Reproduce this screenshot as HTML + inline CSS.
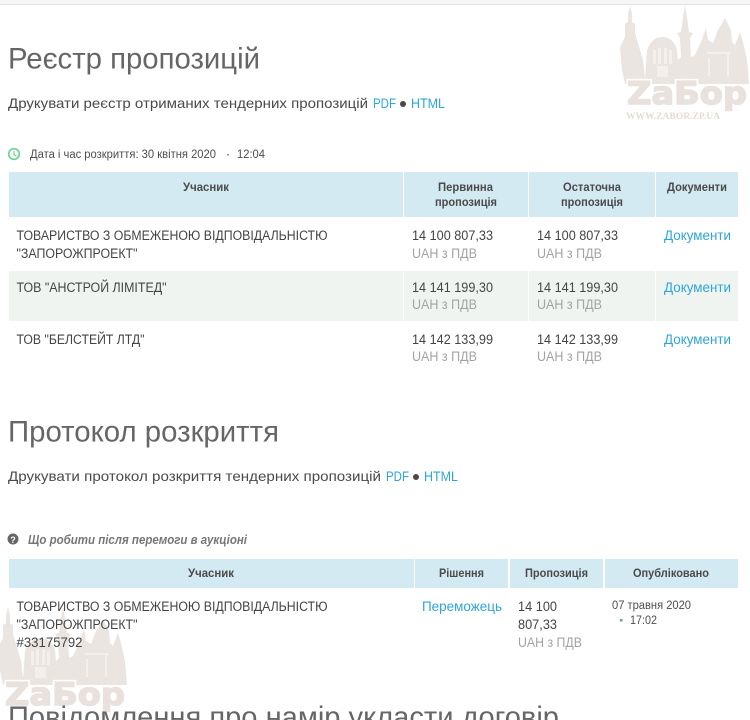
<!DOCTYPE html>
<html lang="uk">
<head>
<meta charset="utf-8">
<title>Реєстр пропозицій</title>
<style>
html,body{margin:0;padding:0;background:#fff;width:750px;height:720px;overflow:hidden}
svg{display:block;position:absolute;left:0;top:0}
text{font-family:"Liberation Sans",sans-serif;white-space:pre}
.h{font-size:30px;fill:#666}
.p{font-size:14px;fill:#4a4a4a}
.l{font-size:14px;fill:#2ea5dc}
.c{font-size:13.5px;fill:#444}
.g{font-size:13.5px;fill:#a3a3a3}
.th{font-size:11.5px;font-weight:bold;fill:#4a4a4a}
.s{font-size:11.5px;fill:#4d4d4d}
.w{font-family:"DejaVu Sans",sans-serif;font-size:31px;font-weight:bold;fill:#e8e1dd;stroke:#e8e1dd;stroke-width:1.4px}
.wo{font-family:"DejaVu Sans",sans-serif;font-size:31px;font-weight:bold;fill:#fff;stroke:#fff;stroke-width:4.5px}
</style>
</head>
<body>
<svg width="750" height="720" viewBox="0 0 750 720" xmlns="http://www.w3.org/2000/svg">
<rect width="750" height="720" fill="#fff"/>
<rect width="750" height="4" fill="#f6f6f6"/>
<rect y="4" width="750" height="1" fill="#e2e2e2"/>

<!-- watermark top right -->
<g>
<path fill="#ebe5e1" d="M620 47L625 37V24L628 22V14L630 6L632 14V22L635 24V33L643 60L645 78L647 50C650 42 655 37 662 37C670 37 675 42 677 50L678 60L681 57L680 38L677 33L681 32L683 17L685 5L687 17L689 32L693 33L690 38L691 57L695 55L701 42L706 28L708 40L713 43L718 30L725 18L731 30L732 42L735 45L740 32L743 42L747 60L749 84H628L625 84L622 70Z"/>
<g fill="#f3efed">
<rect x="653" y="50" width="3" height="14"/><rect x="658" y="48" width="3" height="16"/><rect x="664" y="48" width="3" height="16"/><rect x="669" y="50" width="3" height="14"/>
<rect x="657" y="66" width="11" height="11"/>
<rect x="708" y="58" width="2" height="18"/><rect x="727" y="54" width="2" height="22"/><rect x="707" y="52" width="24" height="2"/>
</g>
<text class="wo" x="627" y="104" textLength="120" lengthAdjust="spacingAndGlyphs">ZaБор</text>
<text class="w" x="627" y="104" textLength="120" lengthAdjust="spacingAndGlyphs">ZaБор</text>
<text x="626" y="119" font-size="9" font-weight="bold" textLength="94" lengthAdjust="spacingAndGlyphs" style="font-family:'Liberation Serif',serif" fill="#e3dcd8">WWW.ZABOR.ZP.UA</text>
</g>

<!-- watermark bottom left -->
<g transform="translate(-622 601)">
<path fill="#ebe5e1" d="M620 47L625 37V24L628 22V14L630 6L632 14V22L635 24V33L643 60L645 78L647 50C650 42 655 37 662 37C670 37 675 42 677 50L678 60L681 57L680 38L677 33L681 32L683 17L685 5L687 17L689 32L693 33L690 38L691 57L695 55L701 42L706 28L708 40L713 43L718 30L725 18L731 30L732 42L735 45L740 32L743 42L747 60L749 84H628L625 84L622 70Z"/>
<g fill="#f3efed">
<rect x="653" y="50" width="3" height="14"/><rect x="658" y="48" width="3" height="16"/><rect x="664" y="48" width="3" height="16"/><rect x="669" y="50" width="3" height="14"/>
<rect x="657" y="66" width="11" height="11"/>
<rect x="708" y="58" width="2" height="18"/><rect x="727" y="54" width="2" height="22"/><rect x="707" y="52" width="24" height="2"/>
</g>
<text class="wo" x="627" y="104" textLength="120" lengthAdjust="spacingAndGlyphs">ZaБор</text>
<text class="w" x="627" y="104" textLength="120" lengthAdjust="spacingAndGlyphs">ZaБор</text>
</g>

<!-- section 1 -->
<text class="h" x="8" y="68.5" textLength="252" lengthAdjust="spacingAndGlyphs">Реєстр пропозицій</text>
<text class="p" x="8" y="108" textLength="360" lengthAdjust="spacingAndGlyphs">Друкувати реєстр отриманих тендерних пропозицій</text>
<text class="l" x="373" y="108" font-size="13" textLength="23" lengthAdjust="spacingAndGlyphs">PDF</text>
<circle cx="403" cy="104" r="3" fill="#4a4a4a"/>
<text class="l" x="411" y="108" textLength="34" lengthAdjust="spacingAndGlyphs">HTML</text>

<!-- clock -->
<circle cx="14" cy="154" r="5.3" fill="none" stroke="#72d19a" stroke-width="1.7"/>
<path d="M14 151V154.5L16.5 156" fill="none" stroke="#72d19a" stroke-width="1.2"/>
<text class="s" x="30" y="158" textLength="186" lengthAdjust="spacingAndGlyphs">Дата і час розкриття: 30 квітня 2020</text>
<rect x="227" y="154" width="2" height="1.5" fill="#7a9a85"/>
<text class="s" x="237" y="158" textLength="28" lengthAdjust="spacingAndGlyphs">12:04</text>

<!-- table 1 -->
<g fill="#d4eaf2">
<rect x="9" y="172" width="394" height="45"/>
<rect x="404" y="172" width="124" height="45"/>
<rect x="529" y="172" width="126" height="45"/>
<rect x="656" y="172" width="82" height="45"/>
</g>
<g fill="#f0f4f1">
<rect x="9" y="271" width="394" height="50"/>
<rect x="404" y="271" width="124" height="50"/>
<rect x="529" y="271" width="126" height="50"/>
<rect x="656" y="271" width="82" height="50"/>
</g>
<text class="th" x="183" y="191" textLength="46" lengthAdjust="spacingAndGlyphs">Учасник</text>
<text class="th" x="438" y="191" textLength="55" lengthAdjust="spacingAndGlyphs">Первинна</text>
<text class="th" x="435" y="206" textLength="62" lengthAdjust="spacingAndGlyphs">пропозиція</text>
<text class="th" x="563" y="191" textLength="58" lengthAdjust="spacingAndGlyphs">Остаточна</text>
<text class="th" x="561" y="206" textLength="62" lengthAdjust="spacingAndGlyphs">пропозиція</text>
<text class="th" x="667" y="191" textLength="60" lengthAdjust="spacingAndGlyphs">Документи</text>

<text class="c" x="16.5" y="240" textLength="311" lengthAdjust="spacingAndGlyphs">ТОВАРИСТВО З ОБМЕЖЕНОЮ ВІДПОВІДАЛЬНІСТЮ</text>
<text class="c" x="16.5" y="258" textLength="121" lengthAdjust="spacingAndGlyphs">"ЗАПОРОЖПРОЕКТ"</text>
<text class="c" x="412" y="240" textLength="81" lengthAdjust="spacingAndGlyphs">14 100 807,33</text>
<text class="g" x="412" y="258" textLength="65" lengthAdjust="spacingAndGlyphs">UAH з ПДВ</text>
<text class="c" x="537" y="240" textLength="81" lengthAdjust="spacingAndGlyphs">14 100 807,33</text>
<text class="g" x="537" y="258" textLength="65" lengthAdjust="spacingAndGlyphs">UAH з ПДВ</text>
<text class="l" x="664" y="240" textLength="67" lengthAdjust="spacingAndGlyphs">Документи</text>

<text class="c" x="16.5" y="292" textLength="150" lengthAdjust="spacingAndGlyphs">ТОВ "АНСТРОЙ ЛІМІТЕД"</text>
<text class="c" x="412" y="292" textLength="81" lengthAdjust="spacingAndGlyphs">14 141 199,30</text>
<text class="g" x="412" y="309" textLength="65" lengthAdjust="spacingAndGlyphs">UAH з ПДВ</text>
<text class="c" x="537" y="292" textLength="81" lengthAdjust="spacingAndGlyphs">14 141 199,30</text>
<text class="g" x="537" y="309" textLength="65" lengthAdjust="spacingAndGlyphs">UAH з ПДВ</text>
<text class="l" x="664" y="292" textLength="67" lengthAdjust="spacingAndGlyphs">Документи</text>

<text class="c" x="16.5" y="344" textLength="128" lengthAdjust="spacingAndGlyphs">ТОВ "БЕЛСТЕЙТ ЛТД"</text>
<text class="c" x="412" y="344" textLength="81" lengthAdjust="spacingAndGlyphs">14 142 133,99</text>
<text class="g" x="412" y="361" textLength="65" lengthAdjust="spacingAndGlyphs">UAH з ПДВ</text>
<text class="c" x="537" y="344" textLength="81" lengthAdjust="spacingAndGlyphs">14 142 133,99</text>
<text class="g" x="537" y="361" textLength="65" lengthAdjust="spacingAndGlyphs">UAH з ПДВ</text>
<text class="l" x="664" y="344" textLength="67" lengthAdjust="spacingAndGlyphs">Документи</text>

<!-- section 2 -->
<text class="h" x="8" y="441.5" textLength="271" lengthAdjust="spacingAndGlyphs">Протокол розкриття</text>
<text class="p" x="8" y="481" textLength="373" lengthAdjust="spacingAndGlyphs">Друкувати протокол розкриття тендерних пропозицій</text>
<text class="l" x="386" y="481" font-size="13" textLength="23" lengthAdjust="spacingAndGlyphs">PDF</text>
<circle cx="416" cy="477" r="3" fill="#4a4a4a"/>
<text class="l" x="424" y="481" textLength="34" lengthAdjust="spacingAndGlyphs">HTML</text>

<!-- help -->
<circle cx="13" cy="539" r="5.5" fill="#666"/>
<text x="13" y="543" text-anchor="middle" font-size="9" font-weight="bold" fill="#fff">?</text>
<text x="28" y="544" font-size="12.5" font-weight="bold" font-style="italic" fill="#777" textLength="219" lengthAdjust="spacingAndGlyphs">Що робити після перемоги в аукціоні</text>

<!-- table 2 -->
<g fill="#d4eaf2">
<rect x="9" y="559" width="405" height="29"/>
<rect x="415" y="559" width="93" height="29"/>
<rect x="510" y="559" width="93" height="29"/>
<rect x="605" y="559" width="133" height="29"/>
</g>
<text class="th" x="188" y="577" textLength="46" lengthAdjust="spacingAndGlyphs">Учасник</text>
<text class="th" x="439" y="577" textLength="45" lengthAdjust="spacingAndGlyphs">Рішення</text>
<text class="th" x="525" y="577" textLength="63" lengthAdjust="spacingAndGlyphs">Пропозиція</text>
<text class="th" x="633" y="577" textLength="76" lengthAdjust="spacingAndGlyphs">Опубліковано</text>

<text class="c" x="16.5" y="611" textLength="311" lengthAdjust="spacingAndGlyphs">ТОВАРИСТВО З ОБМЕЖЕНОЮ ВІДПОВІДАЛЬНІСТЮ</text>
<text class="c" x="16.5" y="629" textLength="121" lengthAdjust="spacingAndGlyphs">"ЗАПОРОЖПРОЕКТ"</text>
<text class="c" x="16.5" y="647" textLength="66" lengthAdjust="spacingAndGlyphs">#33175792</text>
<text class="l" x="422" y="611" textLength="80" lengthAdjust="spacingAndGlyphs">Переможець</text>
<text class="c" x="518" y="611" textLength="39" lengthAdjust="spacingAndGlyphs">14 100</text>
<text class="c" x="518" y="629" textLength="39" lengthAdjust="spacingAndGlyphs">807,33</text>
<text class="g" x="518" y="647" textLength="64" lengthAdjust="spacingAndGlyphs">UAH з ПДВ</text>
<text class="s" x="612" y="609" textLength="79" lengthAdjust="spacingAndGlyphs">07 травня 2020</text>
<rect x="620" y="619" width="2.5" height="2.5" fill="#6aa67e"/>
<text class="s" x="630" y="624" textLength="27" lengthAdjust="spacingAndGlyphs">17:02</text>

<!-- section 3 -->
<text class="h" x="8" y="727" textLength="551" lengthAdjust="spacingAndGlyphs">Повідомлення про намір укласти договір</text>
</svg>
</body>
</html>
